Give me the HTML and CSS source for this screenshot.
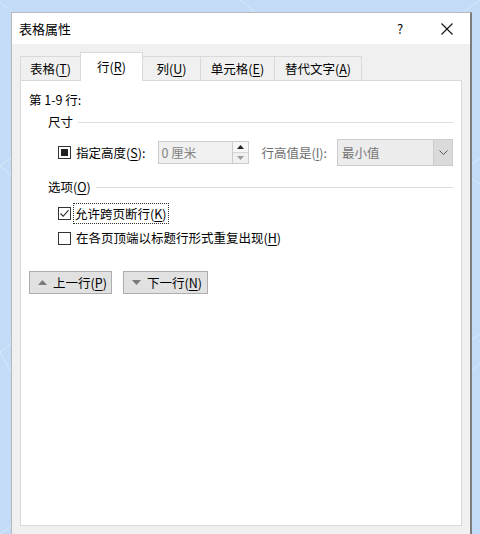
FILE: index.html
```html
<!DOCTYPE html>
<html lang="zh-CN">
<head>
<meta charset="utf-8">
<title>表格属性</title>
<link rel="stylesheet" href="styles.css">
</head>
<body>
<svg class="desktop" width="480" height="534" viewBox="0 0 480 534">
  <g stroke="#d9e8fa" stroke-width="1" fill="none">
    <line x1="0" y1="2" x2="14" y2="14"/>
    <line x1="240" y1="0" x2="256" y2="13"/>
    <line x1="462" y1="13" x2="480" y2="0"/>
    <line x1="12" y1="157" x2="0" y2="166"/>
    <line x1="0" y1="166" x2="12" y2="176"/>
    <line x1="12" y1="343" x2="0" y2="352"/>
    <line x1="0" y1="352" x2="12" y2="374"/>
    <line x1="471" y1="165" x2="480" y2="158"/>
    <line x1="471" y1="178" x2="480" y2="184"/>
    <line x1="471" y1="340" x2="480" y2="334"/>
    <line x1="471" y1="372" x2="480" y2="364"/>
    <line x1="0" y1="534" x2="12" y2="526"/>
  </g>
</svg>
<div class="window">
  <div class="titlebar">
    <span class="title">表格属性</span>
    <span class="help">?</span>
    <span class="close">
      <svg width="12" height="12" viewBox="0 0 12 12"><path d="M0.5 0.5 L11.5 11.5 M11.5 0.5 L0.5 11.5" stroke="#111" stroke-width="1.1" fill="none"/></svg>
    </span>
  </div>
  <div class="body">
    <div class="tabs">
      <div class="tab w1">表格(<u>T</u>)</div>
      <div class="tab active w2">行(<u>R</u>)</div>
      <div class="tab w3">列(<u>U</u>)</div>
      <div class="tab w4">单元格(<u>E</u>)</div>
      <div class="tab w5">替代文字(<u>A</u>)</div>
    </div>
    <div class="panel">
      <div class="rowlabel">第 1-9 行:</div>
      <div class="group"><span class="group-label">尺寸</span><span class="group-line"></span></div>
      <div class="sizerow">
        <span class="box indeterminate"></span>
        <span class="lbl">指定高度(<u>S</u>):</span>
        <div class="spinner">
          <span class="input">0 厘米</span>
          <span class="spin">
            <span class="spin-up"><svg width="7" height="4" viewBox="0 0 7 4"><path d="M0 4 L3.5 0 L7 4 Z" fill="#222"/></svg></span>
            <span class="spin-down"><svg width="7" height="4" viewBox="0 0 7 4"><path d="M0 0 L3.5 4 L7 0 Z" fill="#9a9a9a"/></svg></span>
          </span>
        </div>
        <span class="lbl disabled">行高值是(<u>I</u>):</span>
        <div class="select">
          <span class="select-text">最小值</span>
          <span class="select-btn"><svg width="9" height="5" viewBox="0 0 9 5"><path d="M0.5 0.5 L4.5 4.5 L8.5 0.5" stroke="#555" stroke-width="1" fill="none"/></svg></span>
        </div>
      </div>
      <div class="group g2"><span class="group-label">选项(<u>O</u>)</span><span class="group-line"></span></div>
      <div class="check c1">
        <span class="box"><svg width="11" height="11" viewBox="0 0 11 11"><path d="M1.5 5.5 L4.2 8.3 L9.5 2.2" stroke="#222" stroke-width="1.1" fill="none"/></svg></span>
        <span class="lbl focus">允许跨页断行(<u>K</u>)</span>
      </div>
      <div class="check c2">
        <span class="box"></span>
        <span class="lbl">在各页顶端以标题行形式重复出现(<u>H</u>)</span>
      </div>
      <div class="buttons">
        <div class="btn b1"><svg width="9" height="5" viewBox="0 0 9 5"><path d="M0 5 L4.5 0 L9 5 Z" fill="#7a7a7a"/></svg><span>上一行(<u>P</u>)</span></div>
        <div class="btn b2"><svg width="9" height="5" viewBox="0 0 9 5"><path d="M0 0 L4.5 5 L9 0 Z" fill="#7a7a7a"/></svg><span>下一行(<u>N</u>)</span></div>
      </div>
    </div>
  </div>
</div>
</body>
</html>
```

FILE: styles.css
```css
html, body {
  margin: 0;
  padding: 0;
}
body {
  width: 480px;
  height: 534px;
  overflow: hidden;
  background: #c3dbf6;
  font-family: "Noto Sans CJK SC", "Noto Sans", sans-serif;
  font-size: 12.5px;
  color: #000;
  position: relative;
}
u {
  text-decoration: underline;
  text-underline-offset: 2px;
  text-decoration-thickness: 1px;
}
.desktop {
  position: absolute;
  left: 0;
  top: 0;
  z-index: 0;
}
.window {
  position: relative;
  z-index: 1;
  margin: 12px 0 0 11px;
  width: 458px;
  height: 530px;
  border-left: 1px solid #b9b9b9;
  border-top: 1px solid #b9b9b9;
  border-right: 2px solid #7d7d7d;
  background: #f0f0f0;
  display: flex;
  flex-direction: column;
}
.titlebar {
  height: 31px;
  background: #fff;
  display: flex;
  align-items: center;
  padding-left: 7px;
}
.title {
  font-size: 13px;
  line-height: 31px;
  flex: 1;
}
.help {
  font-size: 13px;
  width: 12px;
  margin-right: 32px;
  line-height: 31px;
}
.close {
  width: 12px;
  height: 12px;
  margin-right: 17px;
  display: flex;
}
.body {
  padding: 8px 8px 0 8px;
  display: flex;
  flex-direction: column;
  flex: 1;
}
.tabs {
  display: flex;
  align-items: flex-end;
  height: 28px;
  position: relative;
  z-index: 2;
}
.tab {
  height: 24px;
  box-sizing: border-box;
  border: 1px solid #d9d9d9;
  border-bottom: none;
  margin-left: -1px;
  background: #f0f0f0;
  line-height: 23px;
  text-align: center;
  position: relative;
}
.tab:first-child {
  margin-left: 0;
}
.tab.active {
  height: 29px;
  background: #fff;
  line-height: 27px;
  margin-bottom: -1px;
  z-index: 3;
}
.w1 { width: 61px; }
.w2 { width: 63px; }
.w3 { width: 59px; }
.w4 { width: 75px; }
.w5 { width: 88px; }
.panel {
  background: #fff;
  border: 1px solid #d9d9d9;
  height: 446px;
  box-sizing: border-box;
  padding: 0 8px 0 8px;
  display: flex;
  flex-direction: column;
}
.rowlabel {
  margin-top: 9px;
  height: 20px;
  line-height: 20px;
}
.group {
  margin-top: 2px;
  height: 20px;
  display: flex;
  align-items: center;
  padding-left: 19px;
}
.group.g2 {
  margin-top: 11px;
}
.group-label {
  line-height: 20px;
  margin-right: 5px;
}
.group-line {
  flex: 1;
  height: 1px;
  background: #dcdcdc;
}
.sizerow {
  margin-top: 7px;
  height: 27px;
  display: flex;
  align-items: center;
  padding-left: 29px;
}
.box {
  width: 13px;
  height: 13px;
  box-sizing: border-box;
  border: 1px solid #333;
  background: #fff;
  display: flex;
  align-items: center;
  justify-content: center;
  flex: none;
}
.box.indeterminate::after {
  content: "";
  width: 7px;
  height: 7px;
  background: #222;
}
.lbl {
  margin-left: 5px;
  line-height: 20px;
  white-space: nowrap;
}
.lbl.disabled {
  color: #6d6d6d;
  margin-left: 12px;
}
.spinner {
  display: flex;
  margin-left: 13px;
  height: 23px;
}
.input {
  width: 74px;
  height: 23px;
  box-sizing: border-box;
  border: 1px solid #cccccc;
  border-right: none;
  background: #f0f0f0;
  color: #838383;
  line-height: 21px;
  padding-left: 2px;
}
.spin {
  width: 17px;
  height: 23px;
  box-sizing: border-box;
  border: 1px solid #cccccc;
  display: flex;
  flex-direction: column;
  background: #f0f0f0;
}
.spin-up, .spin-down {
  flex: 1;
  display: flex;
  align-items: center;
  justify-content: center;
}
.spin-up {
  background: #f7f7f7;
  border-bottom: 1px solid #d6d6d6;
}
.select {
  margin-left: 10px;
  width: 116px;
  height: 27px;
  box-sizing: border-box;
  border: 1px solid #cccccc;
  background: #ececec;
  display: flex;
}
.select-text {
  flex: 1;
  color: #777;
  line-height: 25px;
  padding-left: 4px;
}
.select-btn {
  width: 18px;
  border-left: 1px solid #cccccc;
  background: #dadada;
  display: flex;
  align-items: center;
  justify-content: center;
}
.check {
  height: 20px;
  display: flex;
  align-items: center;
  padding-left: 29px;
}
.check.c1 {
  margin-top: 6px;
}
.check.c2 {
  margin-top: 5px;
}
.lbl.focus {
  margin-left: 3px;
  padding: 0 1px;
  outline: 1px dotted #333;
  outline-offset: 0;
  line-height: 19px;
}
.buttons {
  margin-top: 23px;
  display: flex;
  gap: 11px;
}
.btn {
  height: 23px;
  box-sizing: border-box;
  border: 1px solid #adadad;
  background: #e1e1e1;
  display: flex;
  align-items: center;
  padding-left: 8px;
}
.btn span {
  margin-left: 6px;
  line-height: 21px;
}
.b1 { width: 83px; }
.b2 { width: 85px; }
```
